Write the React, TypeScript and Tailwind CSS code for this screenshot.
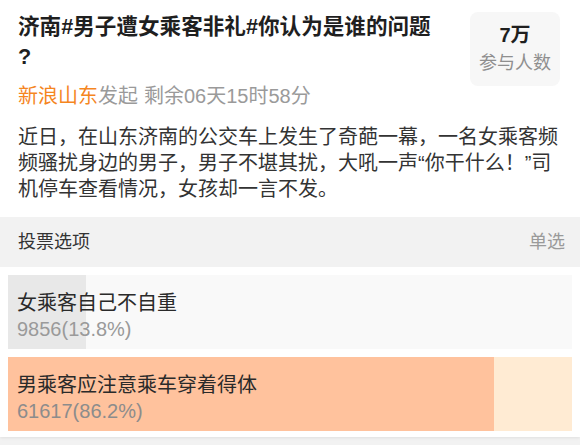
import React from "react";

const FONT = { fontFamily: '"Liberation Sans", "Noto Sans CJK SC", sans-serif' };

const options = [
  { label: "女乘客自己不自重", count: "9856(13.8%)", pct: 13.8, bar: "bg-[#e8e8e8]", bg: "bg-[#f9f9f9]", countColor: "text-[#9a9a9a]" },
  { label: "男乘客应注意乘车穿着得体", count: "61617(86.2%)", pct: 86.2, bar: "bg-[#ffc29d]", bg: "bg-[#ffebd3]", countColor: "text-[#8c8c8c]" },
];

export default function App() {
  return (
    <div className="w-[580px] h-[445px] overflow-hidden bg-[#f2f2f2]" style={FONT}>
      <div className="bg-white shadow-[0_1px_3px_rgba(0,0,0,0.08)] pb-[6px]">
        <div className="flex">
          <div className="flex-1 pl-[18px] pt-3">
            <div className="text-[21.6px] leading-[30px] font-bold text-[#1f1f1f]">
              济南#男子遭女乘客非礼#你认为是谁的问题
              <br />?
            </div>
            <div className="mt-[11px] text-[20px] leading-[26px] text-[#9a9a9a]">
              <span className="text-[#f5861f]">新浪山东</span>
              <span>发起</span>
              <span className="ml-[6px]">剩余06天15时58分</span>
            </div>
          </div>
          <div className="mt-3 mr-5 w-[90px] h-[74px] rounded-lg bg-[#f7f7f7] flex flex-col items-center justify-center">
            <div className="text-[20px] leading-[26px] font-bold text-[#1f1f1f]">7万</div>
            <div className="text-[18px] leading-[26px] text-[#8f8f8f] mt-[2px]">参与人数</div>
          </div>
        </div>
        <p className="mt-[15px] px-[18px] pb-[15px] text-[20px] leading-[26px] text-[#333]">
          近日，在山东济南的公交车上发生了奇葩一幕，一名女乘客频频骚扰身边的男子，男子不堪其扰，大吼一声“你干什么！”司机停车查看情况，女孩却一言不发。
        </p>
        <div className="h-[50px] bg-[#f2f2f2] flex items-center justify-between pl-[18px] pr-[15px]">
          <span className="text-[18px] text-[#333]">投票选项</span>
          <span className="text-[18px] text-[#9a9a9a]">单选</span>
        </div>
        <div className="px-2 pt-2 flex flex-col gap-2">
          {options.map((o) => (
            <div key={o.label} className={`relative h-[74px] ${o.bg}`}>
              <div className={`absolute inset-y-0 left-0 ${o.bar}`} style={{ width: `${o.pct}%` }} />
              <div className="relative pl-[9px] pt-[15px]">
                <div className="text-[20px] leading-[26px] text-[#2a2a2a]">{o.label}</div>
                <div className={`text-[20px] leading-[26px] ${o.countColor}`}>{o.count}</div>
              </div>
            </div>
          ))}
        </div>
      </div>
    </div>
  );
}
